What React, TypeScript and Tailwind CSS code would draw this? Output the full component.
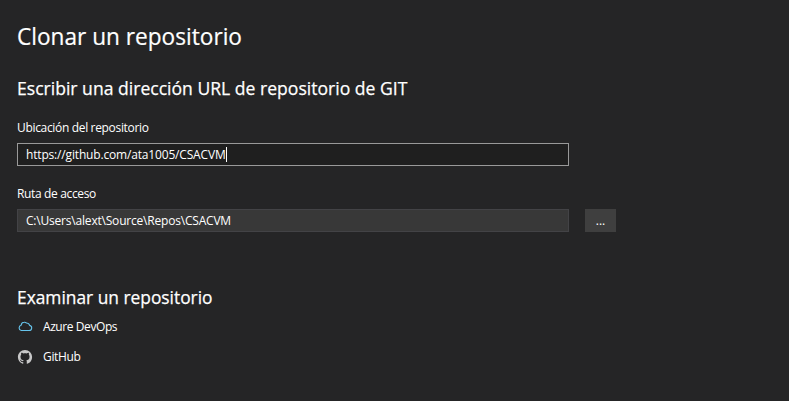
import type { ReactNode } from "react";

function Heading({ children, className }: { children: ReactNode; className: string }) {
  return (
    <h2 className={`h-7 w-max origin-left text-[19px] leading-7 whitespace-nowrap text-white [-webkit-text-stroke:0.25px_#fff] ${className}`}>
      {children}
    </h2>
  );
}

function CloudIcon() {
  return (
    <svg className="h-4 w-4 shrink-0" viewBox="0 0 16 16" fill="none" stroke="#66c3ea" strokeWidth="1.1" strokeLinejoin="round">
      <path d="M4.2 12.4H12a2.6 2.6 0 0 0 .5-5.15A3.2 3.2 0 0 0 9.4 4.9 3 3 0 0 0 7 4.2a3.1 3.1 0 0 0-2.9 3A2.65 2.65 0 0 0 4.2 12.4z" transform="translate(0.1 -0.9)" />
    </svg>
  );
}

function GitHubIcon() {
  return (
    <svg className="h-4 w-4 shrink-0" viewBox="-1 -1 18 18" fill="#c8c8c8">
      <path d="M8 0C3.58 0 0 3.58 0 8c0 3.54 2.29 6.53 5.47 7.59.4.07.55-.17.55-.38 0-.19-.01-.82-.01-1.49-2.01.37-2.53-.49-2.69-.94-.09-.23-.48-.94-.82-1.13-.28-.15-.68-.52-.01-.53.63-.01 1.08.58 1.23.82.72 1.21 1.87.87 2.33.66.07-.52.28-.87.51-1.07-1.78-.2-3.64-.89-3.64-3.95 0-.87.31-1.59.82-2.15-.08-.2-.36-1.02.08-2.12 0 0 .67-.21 2.2.82.64-.18 1.32-.27 2-.27s1.36.09 2 .27c1.53-1.04 2.2-.82 2.2-.82.44 1.1.16 1.92.08 2.12.51.56.82 1.27.82 2.15 0 3.07-1.87 3.75-3.65 3.95.29.25.54.73.54 1.48 0 1.07-.01 1.93-.01 2.2 0 .21.15.46.55.38A8.01 8.01 0 0 0 16 8c0-4.42-3.58-8-8-8z" />
    </svg>
  );
}

export default function App() {
  return (
    <main className="h-[401px] w-[789px] overflow-hidden bg-[#252526] pt-5 pl-[17px] font-['Open_Sans',sans-serif] text-[12px] leading-4 text-white">
      <h1 className="h-8 w-max origin-left scale-x-[0.963] text-[23.5px] leading-8 whitespace-nowrap [-webkit-text-stroke:0.2px_#fff]">
        Clonar un repositorio
      </h1>
      <div className="mt-[22px]">
        <Heading className="scale-x-[0.925]">Escribir una dirección URL de repositorio de GIT</Heading>
      </div>
      <label className="mt-[18px] block h-4 tracking-[-0.33px]">Ubicación del repositorio</label>
      <div className="mt-[7px] flex h-[23px] w-[552px] items-center border border-[#999999] bg-[#1f1f1f] pl-2">
        <span className="tracking-[-0.17px]">https://github.com/ata1005/CSACVM</span>
        <span className="h-[15px] w-px bg-white" />
      </div>
      <label className="mt-5 block h-4 tracking-[-0.35px]">Ruta de acceso</label>
      <div className="mt-[7px] flex h-[23px] gap-4">
        <div className="flex w-[552px] items-center border border-[#434346] bg-[#383838] pl-2">
          <span className="tracking-[-0.2px]">C:\Users\alext\Source\Repos\CSACVM</span>
        </div>
        <button className="w-[31px] bg-[#3f3f3f] leading-[23px]">...</button>
      </div>
      <div className="mt-[51px]">
        <Heading className="scale-x-[0.913]">Examinar un repositorio</Heading>
      </div>
      <div className="mt-2 flex flex-col gap-[14px]">
        <div className="flex h-4 items-center gap-[10px] tracking-[-0.42px]"><CloudIcon /><span>Azure DevOps</span></div>
        <div className="flex h-4 items-center gap-[10px] tracking-[-0.33px]"><GitHubIcon /><span>GitHub</span></div>
      </div>
    </main>
  );
}
